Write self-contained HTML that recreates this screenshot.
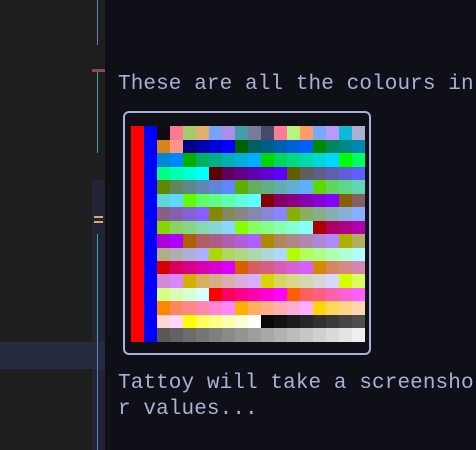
<!DOCTYPE html>
<html><head><meta charset="utf-8"><style>
html,body{margin:0;padding:0}
body{width:476px;height:450px;overflow:hidden;position:relative;background:#0f0f17;font-family:"Liberation Mono",monospace;}
.a{position:absolute}
.t{position:absolute;left:118px;color:#a9b1d6;font-size:21px;letter-spacing:0.1px;line-height:26px;white-space:pre}
#g{position:absolute;left:157px;top:126px;width:208px;display:grid;grid-template-columns:repeat(16,13px);grid-template-rows:14px repeat(15,13.45px)}
</style></head><body>
<div class="a" style="left:0;top:0;width:92px;height:450px;background:#1e1e1e"></div>
<div class="a" style="left:92px;top:0;width:13px;height:180px;background:#1e1e1e"></div>
<div class="a" style="left:92px;top:180px;width:13px;height:270px;background:#222436"></div>
<div class="a" style="left:0;top:342px;width:105px;height:27px;background:#272b3f"></div>
<div class="a" style="left:97px;top:0;width:1px;height:45px;background:#5b7fc0"></div>
<div class="a" style="left:92px;top:69px;width:13px;height:3px;background:#8a4a50"></div>
<div class="a" style="left:97px;top:72px;width:1px;height:81px;background:#3fa3a6"></div>
<div class="a" style="left:94px;top:216px;width:9px;height:2px;background:#e0a860"></div>
<div class="a" style="left:94px;top:221px;width:9px;height:2px;background:#e0a860"></div>
<div class="a" style="left:97px;top:234px;width:1px;height:108px;background:#3fa3a6"></div>
<div class="a" style="left:97px;top:342px;width:1px;height:108px;background:#5b7fc0"></div>
<div class="t" style="top:72px">These are all the colours in</div>
<div class="a" style="left:123px;top:111px;width:244px;height:240px;border:2px solid #a9b1d6;border-radius:6px"></div>
<div class="a" style="left:131px;top:126px;width:13px;height:216px;background:#ff0000"></div>
<div class="a" style="left:144px;top:126px;width:13px;height:216px;background:#0000ff"></div>
<div id="g"></div>
<div class="t" style="top:371px">Tattoy will take a screensho
r values...</div>
<script>
var c="0e0d15 fb7a91 a2cd6a e1b16b 7aa2f7 ad8ee6 449dab 787c99 444b6a ff7a93 b9f27c ff9e64 7da6ff bb9af7 0db9d7 acb0d0 d5851a ff958a";
var s=[];var v=[0,95,135,175,215,255];
for(var r=0;r<6;r++)for(var g=0;g<6;g++)for(var b=0;b<6;b++)s.push(((1<<24)+(v[r]<<16)+(v[g]<<8)+v[b]).toString(16).slice(1));
for(var i=0;i<24;i++){var x=8+i*10;s.push(((1<<24)+(x<<16)+(x<<8)+x).toString(16).slice(1));}
var all=c.split(" ").concat(s.slice(2));
var h="";for(var i=0;i<256;i++)h+='<div style="background:#'+all[i]+'"></div>';
document.getElementById("g").innerHTML=h;
</script>
</body></html>
